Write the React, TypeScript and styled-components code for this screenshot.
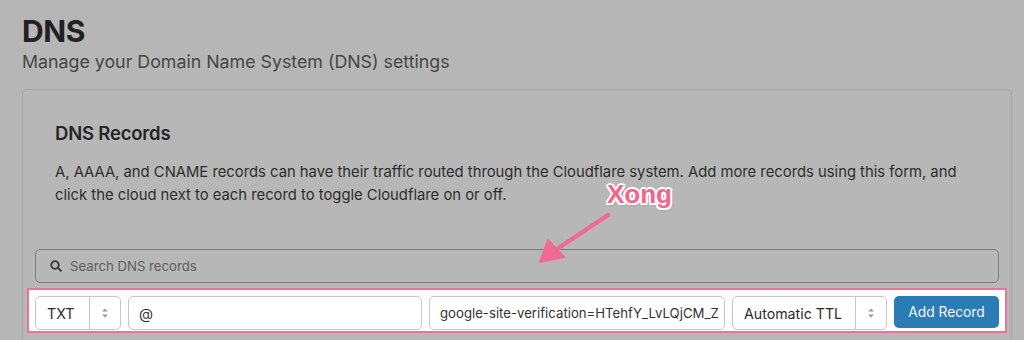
import React from "react";
import styled, { createGlobalStyle } from "styled-components";

const GlobalStyle = createGlobalStyle`
  html, body { margin: 0; padding: 0; }
  body {
    background: #b6b6b6;
    font-family: Inter, "Noto Sans", "Liberation Sans", sans-serif;
    color: #2a2a2a;
    width: 1024px;
    height: 340px;
    overflow: hidden;
  }
  * { box-sizing: border-box; }
`;

const Page = styled.div`
  position: relative;
  padding: 13px 12px 0 22px;
`;

const Title = styled.h1`
  margin: 0;
  font-size: 30px;
  line-height: 36px;
  font-weight: 700;
  color: #222;
  letter-spacing: -0.4px;
`;

const Subtitle = styled.p`
  margin: 3px 0 0;
  font-size: 17.8px;
  line-height: 20px;
  font-weight: 400;
  color: #464646;
`;

const Panel = styled.section`
  margin-top: 17px;
  border: 1px solid #a4a4a4;
  border-bottom: none;
  border-radius: 5px 5px 0 0;
  background: #b7b7b7;
  padding: 31px 12px 0;
  height: 260px;
`;

const Intro = styled.div`
  padding: 0 20px;
`;

const SectionTitle = styled.h2`
  margin: 0;
  font-size: 18.5px;
  line-height: 24px;
  font-weight: 600;
  color: #262626;
  letter-spacing: -0.2px;
`;

const Description = styled.p`
  margin: 16px 0 0;
  font-size: 14.8px;
  line-height: 23px;
  color: #2e2e2e;
  max-width: 920px;
`;

const SearchBox = styled.div`
  margin-top: 42px;
  height: 34px;
  border: 1px solid #7d7d7d;
  border-radius: 5px;
  display: flex;
  align-items: center;
  gap: 8px;
  padding: 0 14px;
  font-size: 13.2px;
`;

const Placeholder = styled.span`
  color: #5e5e5e;
`;

const FormRow = styled.div`
  margin: 5px -8px 0;
  border: 2px solid #e9739b;
  background: #fff;
  padding: 6px 6px 1px;
  display: flex;
  gap: 7px;
`;

const Field = styled.div<{ $w: number; $size: number }>`
  width: ${(p) => p.$w}px;
  flex: 0 0 ${(p) => p.$w}px;
  height: 34px;
  border: 1px solid #c6c6c6;
  border-radius: 5px;
  background: #fff;
  display: flex;
  align-items: center;
  padding-left: 10px;
  font-size: ${(p) => p.$size}px;
  color: #333;
  white-space: nowrap;
  overflow: hidden;
`;

const SelectField = styled.div<{ $w: number; $arrow: number }>`
  width: ${(p) => p.$w}px;
  flex: 0 0 ${(p) => p.$w}px;
  height: 34px;
  border: 1px solid #c6c6c6;
  border-radius: 5px;
  background: #fff;
  display: grid;
  grid-template-columns: 1fr ${(p) => p.$arrow}px;
  font-size: 14.2px;
  color: #2b2b2b;
`;

const SelectValue = styled.span`
  display: flex;
  align-items: center;
  padding-left: 11px;
  white-space: nowrap;
`;

const SelectArrow = styled.span`
  border-left: 1px solid #c6c6c6;
  display: flex;
  align-items: center;
  justify-content: center;
`;

const AddButton = styled.button`
  flex: 0 0 105px;
  height: 32px;
  border: none;
  border-radius: 5px;
  background: #2b7bb4;
  color: #f4f8fb;
  font-family: inherit;
  font-size: 13.8px;
  padding: 0;
`;

const Note = styled.span`
  position: absolute;
  left: 607px;
  top: 178px;
  font-family: "Liberation Sans", Arial, sans-serif;
  font-weight: 700;
  font-size: 26px;
  line-height: 32px;
  color: #f1658f;
  text-shadow:
    -2px 0 #fff, 2px 0 #fff, 0 -2px #fff, 0 2px #fff,
    -1.5px -1.5px #fff, 1.5px 1.5px #fff, -1.5px 1.5px #fff, 1.5px -1.5px #fff,
    1px 2px 3px rgba(0,0,0,0.25);
`;

const ArrowSvg = styled.svg`
  position: absolute;
  left: 530px;
  top: 205px;
  overflow: visible;
`;

const Updown = () => (
  <svg width="8" height="12" viewBox="0 0 8 12">
    <path d="M4 1.5 L7 4.5 H1 Z" fill="#9a9a9a" />
    <path d="M4 10.5 L7 7.5 H1 Z" fill="#9a9a9a" />
  </svg>
);

export default function App() {
  return (
    <>
      <GlobalStyle />
      <Page>
        <Title>DNS</Title>
        <Subtitle>Manage your Domain Name System (DNS) settings</Subtitle>
        <Panel>
          <Intro>
            <SectionTitle>DNS Records</SectionTitle>
            <Description>
              A, AAAA, and CNAME records can have their traffic routed through the Cloudflare system. Add more records using this form, and click the cloud next to each record to toggle Cloudflare on or off.
            </Description>
          </Intro>
          <SearchBox>
            <svg width="12" height="12" viewBox="0 0 12 12">
              <circle cx="5" cy="5" r="3.8" fill="none" stroke="#3a3a3a" strokeWidth="1.8" />
              <path d="M7.9 7.9 L10.8 10.8" stroke="#3a3a3a" strokeWidth="2" strokeLinecap="round" />
            </svg>
            <Placeholder>Search DNS records</Placeholder>
          </SearchBox>
          <FormRow>
            <SelectField $w={86} $arrow={31}>
              <SelectValue>TXT</SelectValue>
              <SelectArrow><Updown /></SelectArrow>
            </SelectField>
            <Field $w={294} $size={14.5}>@</Field>
            <Field $w={296} $size={13.2}>google-site-verification=HTehfY_LvLQjCM_Z</Field>
            <SelectField $w={155} $arrow={31}>
              <SelectValue>Automatic TTL</SelectValue>
              <SelectArrow><Updown /></SelectArrow>
            </SelectField>
            <AddButton>Add Record</AddButton>
          </FormRow>
        </Panel>
        <Note>Xong</Note>
        <ArrowSvg width="90" height="60" viewBox="0 0 90 60">
          <path d="M78 10 L24 46" stroke="#f06a96" strokeWidth="4.5" strokeLinecap="round" />
          <path d="M10 57 L18 35 L34 52 Z" fill="#f06a96" stroke="#f06a96" strokeWidth="2" strokeLinejoin="round" />
        </ArrowSvg>
      </Page>
    </>
  );
}
